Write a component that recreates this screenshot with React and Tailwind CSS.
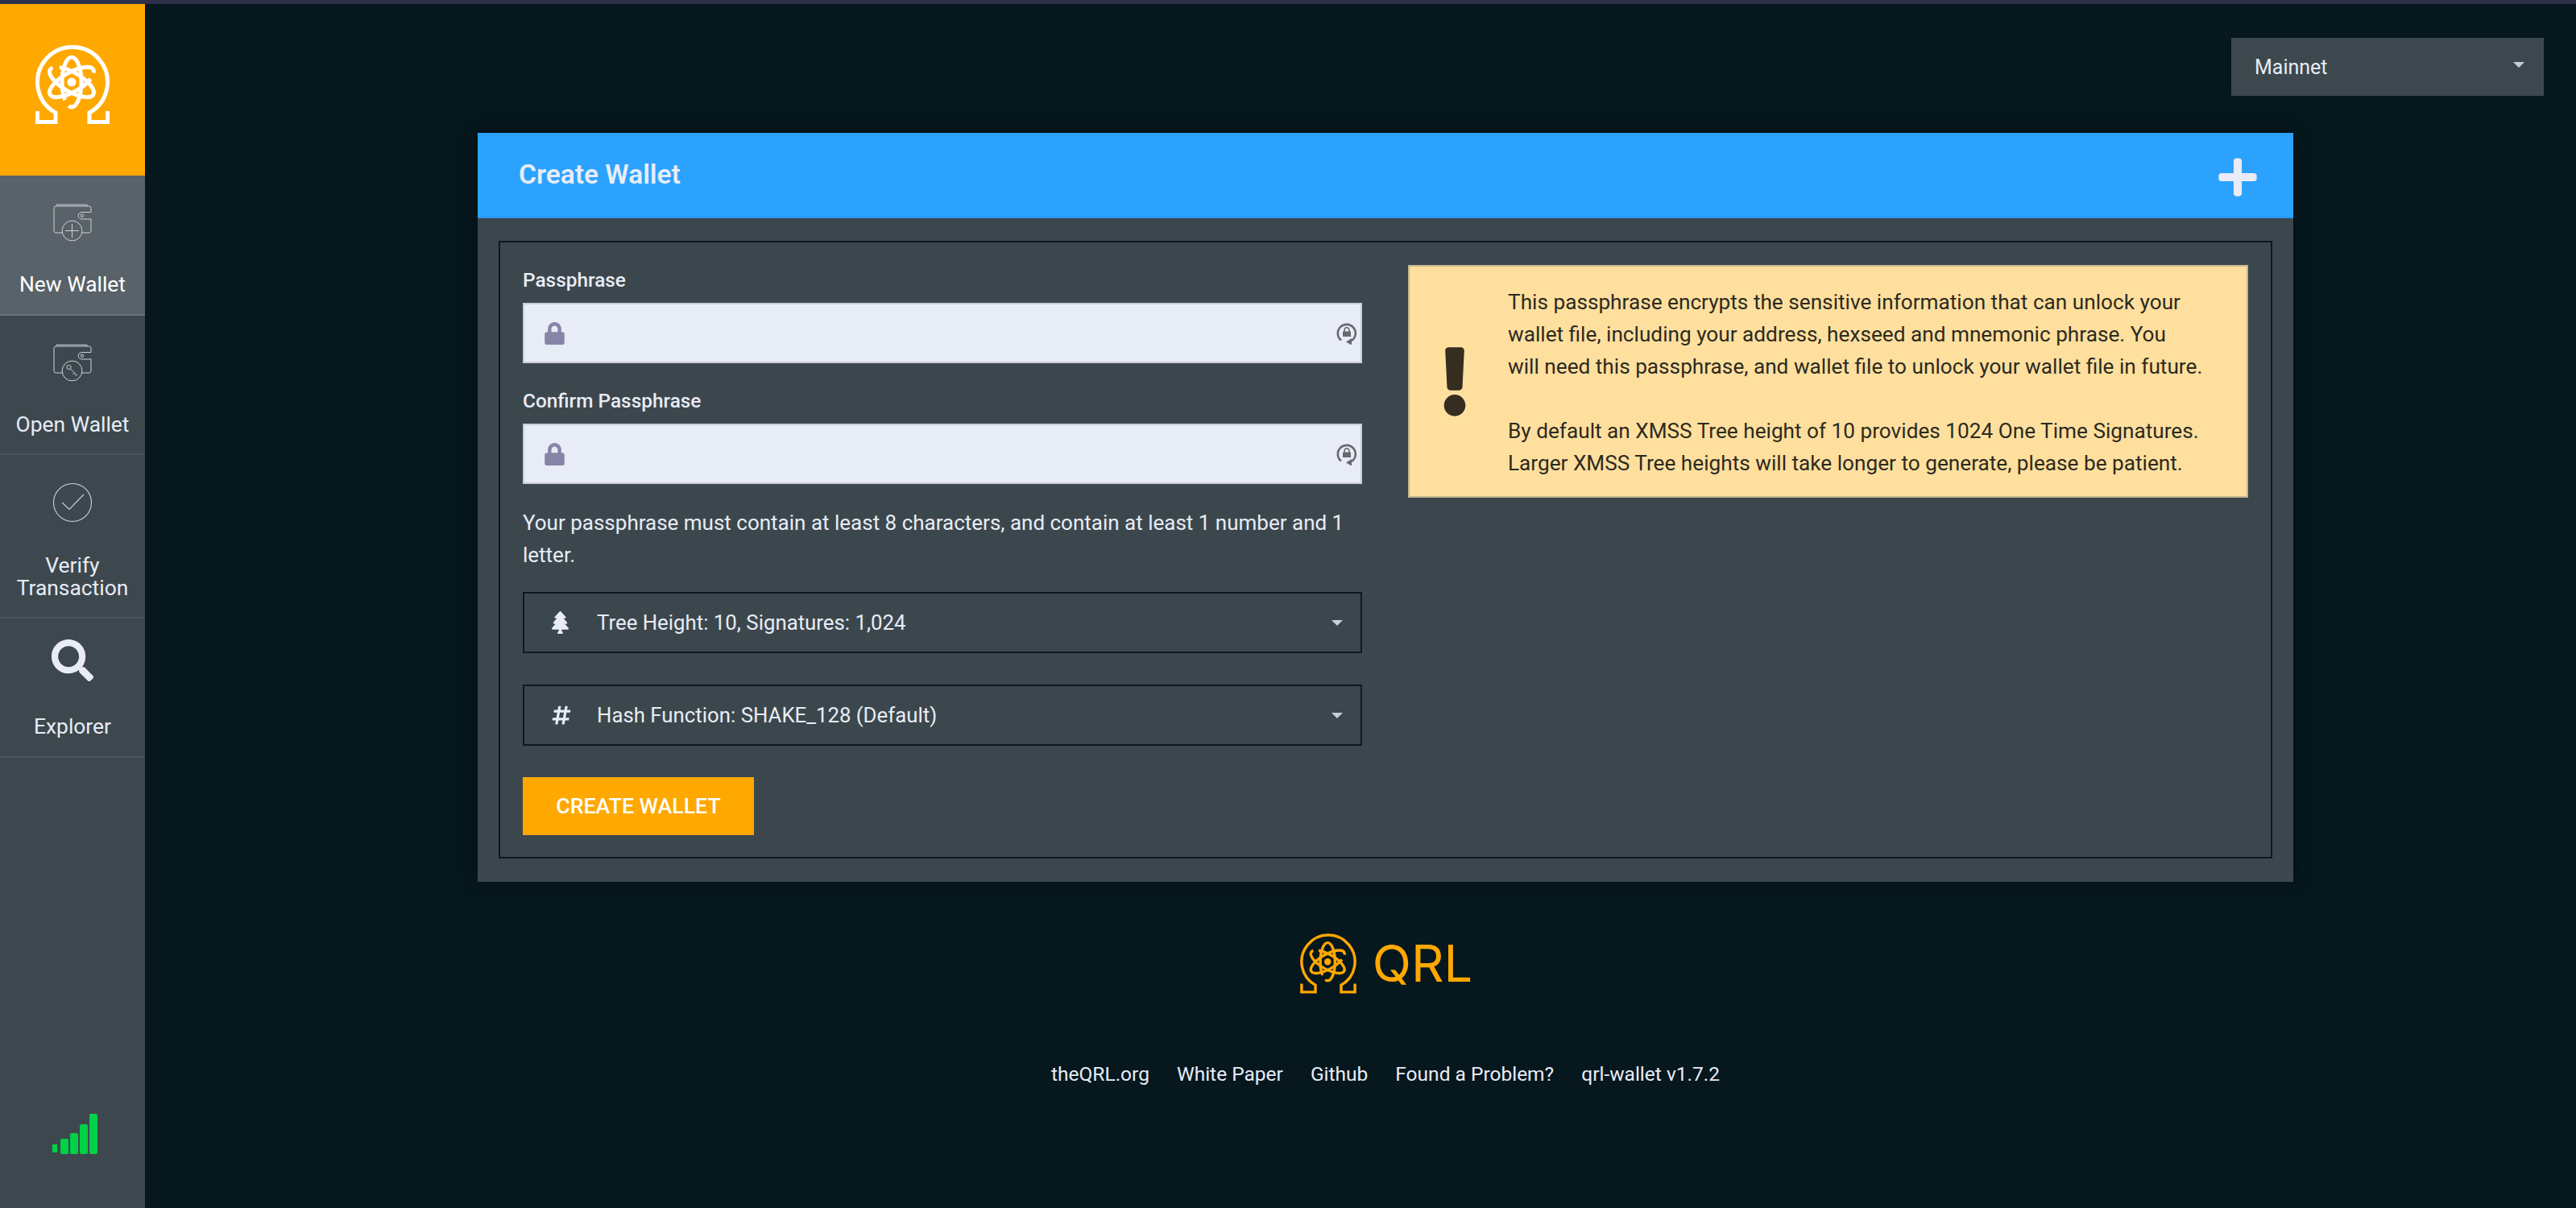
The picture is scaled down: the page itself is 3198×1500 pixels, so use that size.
import React from "react";
import { FaSearch, FaLock, FaTree, FaHashtag, FaPlus, FaExclamation } from "react-icons/fa";

const font = { fontFamily: '"Roboto", "Liberation Sans", sans-serif' };

function QrlMark({ className, sw = 5 }) {
  return (
    <svg viewBox="0 0 92 98" className={className} fill="none" stroke="currentColor" strokeWidth={sw}>
      <path d="M2.5 82V95.5H25V84A43.5 43.5 0 1 1 67 84V95.5H89.5V82" strokeLinejoin="miter" />
      <ellipse cx="45" cy="46" rx="12" ry="31" pathLength="100" strokeDasharray="94 6" strokeDashoffset="-34" />
      <ellipse cx="45" cy="46" rx="12" ry="31" pathLength="100" strokeDasharray="94 6" strokeDashoffset="-34" transform="rotate(120 45 46)" />
      <ellipse cx="45" cy="46" rx="12" ry="31" pathLength="100" strokeDasharray="94 6" strokeDashoffset="-34" transform="rotate(240 45 46)" />
      <circle cx="45" cy="46" r="5.5" fill="currentColor" stroke="none" />
    </svg>
  );
}

function WalletBase({ children }) {
  return (
    <svg viewBox="0 0 50 48" className="w-[50px] h-[48px]" fill="none" stroke="#cdd2db" strokeWidth="1">
      <path d="M5 3.5V2.2H43V4" />
      <path d="M12.6 37H4.5Q2 37 2 34.5V6.5Q2 4 4.5 4H45.5Q48 4 48 6.5V11.5" />
      <path d="M48 20V34.5Q48 37 45.5 37H36.4" />
      <path d="M48 11.5H36.5A4.2 4.2 0 0 0 36.5 20H48" />
      <circle cx="37" cy="15.7" r="1.7" />
      <circle cx="24.5" cy="34.5" r="12.4" />
      {children}
    </svg>
  );
}

function NavItem({ icon, label, active, h, pt, labelPt = "pt-[16px]" }) {
  return (
    <div
      className={`flex flex-col items-center border-b-2 ${active ? "bg-[#586268] border-[#687278] text-white" : "border-[#4a555b] text-[#e8ecf6]"} ${h}`}
    >
      <div className={`flex justify-center ${pt}`}>{icon}</div>
      <div className={`flex-1 flex items-center justify-center text-center text-[26.4px] leading-[28px] ${labelPt}`}>{label}</div>
    </div>
  );
}

function LockCycle() {
  return (
    <svg viewBox="0 0 26 28" className="w-[26px] h-[28px]" fill="#666a70">
      <path d="M6 22.5A11 11 0 1 1 19 23" fill="none" stroke="#666a70" strokeWidth="2.6" />
      <path d="M12 24.5L19 20V28.5Z" />
      <path d="M8 11.5H9.4V9.5A3.6 3.6 0 0 1 16.6 9.5V11.5H18V18H8ZM11 11.5H15V9.5A2 2 0 0 0 11 9.5Z" fillRule="evenodd" />
    </svg>
  );
}

function Field({ label }) {
  return (
    <div>
      <div className="text-[24.4px] leading-[28px] font-medium text-[#e8ecf6] mb-[14px]">{label}</div>
      <div className="h-[75px] border-2 border-[#c8cdd7] bg-[#e8ecf6] flex items-center justify-between pl-[25px] pr-[4px]">
        <FaLock className="w-[25px] h-[28px] text-[#8685a8]" />
        <LockCycle />
      </div>
    </div>
  );
}

function Select({ icon, label, className }) {
  return (
    <div className={`h-[76px] border-2 border-[#0a1a22] flex items-center pl-[33px] pr-[22px] text-[#e8ecf6] text-[25.8px] ${className}`}>
      <div className="w-[57px] flex-none flex items-center">{icon}</div>
      <span className="flex-1">{label}</span>
      <span className="w-0 h-0 border-x-[7px] border-x-transparent border-t-[7px] border-t-[#c8cdd7]" />
    </div>
  );
}

export default function App() {
  return (
    <div className="h-[1500px] w-[3198px] bg-[#06171e] flex flex-col overflow-hidden" style={font}>
      <div className="h-[5px] bg-[#2f3049] flex-none" />
      <div className="flex flex-1">
        <aside className="w-[180px] flex-none bg-[#3d484e] flex flex-col">
          <div className="h-[213px] bg-[#ffa800] flex items-center justify-center text-white pb-[13px]">
            <QrlMark className="w-[92px] h-[98px]" />
          </div>
          <NavItem
            active
            h="h-[174px]"
            pt="pt-[34px]"
            label="New Wallet"
            icon={
              <WalletBase>
                <path d="M24.5 26V43M16 34.5H33" />
              </WalletBase>
            }
          />
          <NavItem
            h="h-[173px]"
            pt="pt-[34px]"
            label="Open Wallet"
            icon={
              <WalletBase>
                <circle cx="20.5" cy="30" r="2.6" />
                <path d="M22.5 32L30.5 40M27.5 37L25.5 39M30 39.5L28.5 41" />
              </WalletBase>
            }
          />
          <NavItem
            h="h-[203px]"
            pt="pt-[34px]"
            label={<span>Verify<br />Transaction</span>}
            icon={
              <svg viewBox="0 0 50 50" className="w-[50px] h-[50px]" fill="none" stroke="#cdd2db" strokeWidth="1.1">
                <circle cx="25" cy="25" r="23.5" />
                <path d="M12 25L21 33.5L39 15" />
              </svg>
            }
          />
          <NavItem
            h="h-[173px]"
            pt="pt-[26px]"
            labelPt="pt-[18px]"
            label="Explorer"
            icon={<FaSearch className="w-[52px] h-[52px] text-[#e8ecf6]" />}
          />
          <div className="flex-1 flex items-end justify-center pb-[67px]">
            <svg viewBox="0 0 57 50" className="w-[57px] h-[50px] ml-[6px]" fill="#00d146">
              <rect x="0" y="38" width="6" height="10" />
              <rect x="10" y="31" width="10" height="19" rx="2" />
              <rect x="22" y="24" width="10" height="26" rx="2" />
              <rect x="34" y="13" width="10" height="37" rx="2" />
              <rect x="46" y="0" width="10" height="50" rx="2" />
            </svg>
          </div>
        </aside>
        <main className="flex-1 min-w-0 flex flex-col">
          <div className="flex justify-end pt-[42px] pr-[40px]">
            <div className="w-[388px] h-[72px] bg-[#3d484e] flex items-center justify-between pl-[29px] pr-[24px] text-[#e8ecf6] text-[25px]">
              <span className="pt-[2px]">Mainnet</span>
              <span className="w-0 h-0 mb-[6px] border-x-[7px] border-x-transparent border-t-[7px] border-t-[#c8cdd7]" />
            </div>
          </div>
          <div className="ml-[413px] w-[2254px] mt-[46px]">
            <section className="shadow-[0_0_20px_rgba(0,0,0,0.35)]">
              <div className="h-[106px] bg-[#2ca2ff] border-b-2 border-[#2a98ef] flex items-center justify-between pl-[51px] pr-[42px]">
                <h1 className="text-[33.5px] font-semibold text-[#e8ecf6]">Create Wallet</h1>
                <FaPlus className="w-[54px] h-[54px] mt-[6px] text-[#e8ecf6]" />
              </div>
              <div className="bg-[#3c474d] px-[26px] pt-[28px] pb-[29px]">
                <div className="h-[767px] border-2 border-[#0a1a22] pl-[28px] pr-[28px] pt-[28px] flex gap-[57px]">
                  <div className="w-[1042px] flex-none flex flex-col">
                    <div className="flex flex-col gap-[33px] pt-[5px]">
                      <Field label="Passphrase" />
                      <Field label="Confirm Passphrase" />
                    </div>
                    <p className="mt-[28px] text-[26px] leading-[40px] text-[#e8ecf6]">
                      Your passphrase must contain at least 8 characters, and contain at least 1 number and 1 letter.
                    </p>
                    <Select className="mt-[26px]" icon={<FaTree className="w-[21px] h-[28px] ml-[1px]" />} label="Tree Height: 10, Signatures: 1,024" />
                    <Select className="mt-[39px]" icon={<FaHashtag className="w-[26px] h-[26px]" />} label="Hash Function: SHAKE_128 (Default)" />
                    <button className="mt-[39px] w-[287px] h-[72px] bg-[#ffa800] text-white text-[26.7px] font-medium">CREATE WALLET</button>
                  </div>
                  <div className="flex-1 h-[289px] border-2 border-[#c5b78f] bg-[#ffdf9e] flex items-center text-[#2c2a20]">
                    <div className="w-[112px] flex-none flex justify-center">
                      <FaExclamation className="w-[32px] h-[86px] text-[#352d20]" />
                    </div>
                    <div className="text-[26.2px] leading-[40px] ml-[10px] pt-[3px]">
                      <p>This passphrase encrypts the sensitive information that can unlock your<br />wallet file, including your address, hexseed and mnemonic phrase. You<br />will need this passphrase, and wallet file to unlock your wallet file in future.</p>
                      <p className="mt-[40px]">By default an XMSS Tree height of 10 provides 1024 One Time Signatures.<br />Larger XMSS Tree heights will take longer to generate, please be patient.</p>
                    </div>
                  </div>
                </div>
              </div>
            </section>
            <div className="flex flex-col items-center mt-[64px]">
              <div className="flex items-center gap-[20px] text-[#ffa800] ml-[2px]">
                <QrlMark className="w-[70px] h-[75px]" sw={4.5} />
                <span className="text-[63px] leading-none" style={{ fontFamily: '"Inter", sans-serif' }}>QRL</span>
              </div>
              <nav className="mt-[82px] flex gap-[34px] text-[24.5px] text-[#e8ecf6]">
                <span>theQRL.org</span>
                <span>White Paper</span>
                <span>Github</span>
                <span>Found a Problem?</span>
                <span>qrl-wallet v1.7.2</span>
              </nav>
            </div>
          </div>
        </main>
      </div>
    </div>
  );
}
